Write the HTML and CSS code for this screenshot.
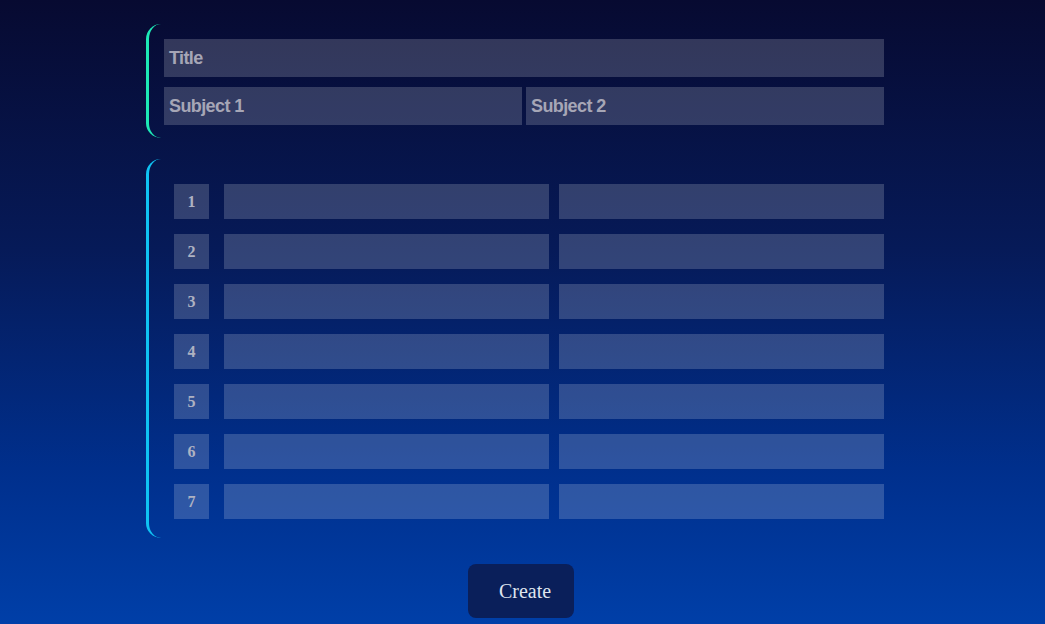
FILE: index.html
```html
<!DOCTYPE html>
<html>
<head>
<meta charset="utf-8">
<link rel="stylesheet" href="styles.css">
</head>
<body>
<main class="page">
  <section class="card card-head">
    <div class="field field-title">Title</div>
    <div class="subjects">
      <div class="field">Subject 1</div>
      <div class="field">Subject 2</div>
    </div>
  </section>
  <section class="card card-rows">
    <div class="row"><div class="num">1</div><div class="cell"></div><div class="cell"></div></div>
    <div class="row"><div class="num">2</div><div class="cell"></div><div class="cell"></div></div>
    <div class="row"><div class="num">3</div><div class="cell"></div><div class="cell"></div></div>
    <div class="row"><div class="num">4</div><div class="cell"></div><div class="cell"></div></div>
    <div class="row"><div class="num">5</div><div class="cell"></div><div class="cell"></div></div>
    <div class="row"><div class="num">6</div><div class="cell"></div><div class="cell"></div></div>
    <div class="row"><div class="num">7</div><div class="cell"></div><div class="cell"></div></div>
  </section>
  <button class="create">Create</button>
</main>
</body>
</html>
```
FILE: styles.css
```css
html, body {
  margin: 0;
  height: 100%;
}
body {
  background: linear-gradient(to bottom, #070a31 0%, #061a58 40%, #002f8c 75%, #003fa8 100%);
  overflow: hidden;
  padding-right: 3px;
  box-sizing: border-box;
}
.page {
  width: 750px;
  margin: 0 auto;
  padding-top: 24px;
  display: flex;
  flex-direction: column;
  align-items: center;
}
.card {
  width: 750px;
  box-sizing: border-box;
  border-left: 3px solid #1de9b6;
  border-radius: 15px;
  display: flex;
  flex-direction: column;
}
.card-head {
  padding: 15px 12px 13px 15px;
  gap: 10px;
}
.field {
  height: 38px;
  background: rgba(255, 255, 255, 0.18);
  color: #a6a6b6;
  font-family: "Liberation Sans", Arial, sans-serif;
  font-weight: bold;
  font-size: 18px;
  letter-spacing: -0.6px;
  line-height: 39px;
  padding-left: 5px;
  box-sizing: border-box;
  flex: 1;
}
.field-title { flex: none; }
.subjects {
  display: flex;
  gap: 4px;
}
.card-rows {
  margin-top: 21px;
  border-left-color: #0fc3f3;
  padding: 25px 12px 19px 25px;
  gap: 15px;
}
.row {
  display: flex;
  height: 35px;
}
.num {
  width: 35px;
  background: rgba(255, 255, 255, 0.18);
  color: #aeb2c2;
  font-family: "Liberation Serif", "Times New Roman", serif;
  font-weight: bold;
  font-size: 16px;
  display: flex;
  align-items: center;
  justify-content: center;
  margin-right: 15px;
}
.cell {
  width: 325px;
  background: rgba(255, 255, 255, 0.18);
}
.cell + .cell { margin-left: 10px; }
.create {
  margin-top: 26px;
  width: 106px;
  height: 54px;
  border: none;
  border-radius: 8px;
  background: #0a1f5a;
  color: #dfe4ee;
  font-family: "Liberation Serif", "Times New Roman", serif;
  font-size: 20px;
  padding: 0 0 0 8px;
}
```
